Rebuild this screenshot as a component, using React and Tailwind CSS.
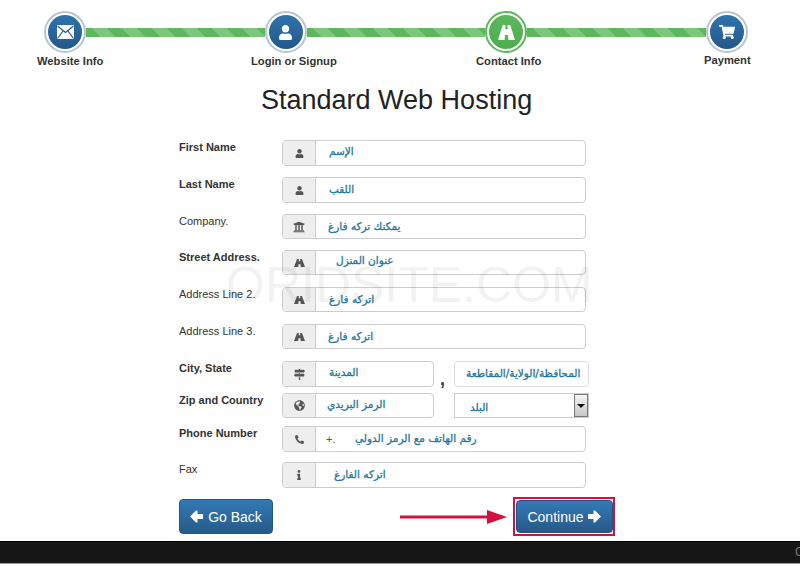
import React from "react";
import {
  FaUser,
  FaUniversity,
  FaMapSigns,
  FaGlobeAmericas,
  FaPhoneAlt,
  FaInfo,
  FaShoppingCart,
} from "react-icons/fa";

const arial = "font-['Liberation_Sans',Arial,sans-serif]";
const arabic = "font-['DejaVu_Sans','Liberation_Sans',sans-serif]";

const MailIcon = () => (
  <svg width="17" height="14" viewBox="0 0 17 14">
    <rect width="17" height="14" fill="#fff" />
    <path d="M.5 1l8 6.500 8-6.500M.5 13.500l5.500-7.500M16.500 13.500L11 6" fill="none" stroke="#24578a" strokeWidth="1.2" />
  </svg>
);

const RoadIcon = ({ w = 18, h = 18 }) => (
  <svg width={w} height={h} viewBox="0 0 18 18" preserveAspectRatio="none" fill="currentColor">
    <path d="M5 0h3L7.700 5h2.600L10 0h3l5 18h-7l-.4-6H7.400L7 18H0z" />
  </svg>
);

const ArrowLeft = () => (
  <svg width="13" height="13" viewBox="0 0 13 13" fill="#fff">
    <path d="M0 6.500L6 .5h1.500v3.500H13v5H7.500v3.500H6z" />
  </svg>
);

const ArrowRight = () => (
  <svg width="13" height="13" viewBox="0 0 13 13" fill="#fff">
    <path d="M13 6.500L7 .5H5.500v3.500H0v5h5.500v3.500H7z" />
  </svg>
);

const Step = ({ icon, green }) => (
  <div
    className={`flex h-[42px] w-[42px] shrink-0 rounded-full border-2 bg-white p-[2px] ${
      green ? "border-[#5cb85c]" : "border-[#b7c4d2]"
    }`}
  >
    <div
      className={`flex flex-1 items-center justify-center rounded-full text-white ${
        green
          ? "bg-gradient-to-b from-[#5cb85c] to-[#4cae4c]"
          : "bg-gradient-to-b from-[#2f74ad] to-[#24578a]"
      }`}
    >
      {icon}
    </div>
  </div>
);

const Bar = () => (
  <div className="h-[9px] flex-1 bg-[repeating-linear-gradient(45deg,#5cb85c_0,#5cb85c_10.6px,#7cc77c_10.6px,#7cc77c_21.2px)]" />
);

const Addon = ({ icon }) => (
  <div className="flex w-[33px] shrink-0 items-center justify-center border-r border-[#ccc] bg-[#eee] text-[11px] text-[#555]">
    {icon}
  </div>
);

const Value = ({ children, className = "" }) => (
  <span
    dir="rtl"
    className={`${arabic} text-[10.500px] whitespace-nowrap text-[#23769c] [-webkit-text-stroke:0.3px_#23769c] ${className}`}
  >
    {children}
  </span>
);

const Group = ({ icon, short, className = "", children }) => (
  <div className={`flex overflow-hidden rounded border border-[#ccc] bg-white ${short ? "h-[25px]" : "h-[26px]"} ${className}`}>
    <Addon icon={icon} />
    <div className="flex flex-1 items-center">{children}</div>
  </div>
);

const Row = ({ label, bold, className = "", children }) => (
  <div className={`flex h-[26px] ${className}`}>
    <div className={`w-[103px] shrink-0 text-[11px] leading-[14px] whitespace-nowrap text-[#333] ${bold ? "font-bold" : ""}`}>
      {label}
    </div>
    {children}
  </div>
);

const App = () => {
  return (
    <div className={`relative flex h-[566px] w-[800px] flex-col overflow-hidden bg-white ${arial}`}>
      {/* stepper */}
      <div className="flex items-center pt-[11px] pl-[44px] pr-[52px]">
        <Step icon={<MailIcon />} />
        <Bar />
        <Step icon={<FaUser size={15} />} />
        <Bar />
        <Step green icon={<RoadIcon w={17} h={15} />} />
        <Bar />
        <Step icon={<FaShoppingCart size={16} />} />
      </div>
      <div className="mt-[1px] flex pl-[37px] text-[11.200px] leading-[14px] font-bold whitespace-nowrap text-[#333]">
        <span className="w-[66px]">Website Info</span>
        <span className="ml-[148px] w-[85px]">Login or Signup</span>
        <span className="ml-[140px] w-[64px]">Contact Info</span>
        <span className="ml-[164px] -mt-px">Payment</span>
      </div>

      <h1 className="mt-[13px] pl-[261px] text-[27px] leading-[38px] text-[#222]">Standard Web Hosting</h1>

      {/* form */}
      <div className="mt-[21px] pl-[179px]">
        <Row label="First Name" bold>
          <Group icon={<FaUser size={9} />} className="w-[304px]">
            <Value className="ml-[13px] -mt-[3px]">الإسم</Value>
          </Group>
        </Row>
        <Row label="Last Name" bold className="mt-[11px]">
          <Group icon={<FaUser size={9} />} className="w-[304px]">
            <Value className="ml-[13px]">اللقب</Value>
          </Group>
        </Row>
        <Row label="Company." className="mt-[11px]">
          <Group short icon={<FaUniversity size={12} />} className="w-[304px]">
            <Value className="ml-[12px]">يمكنك تركه فارغ</Value>
          </Group>
        </Row>
        <Row label="Street Address." bold className="mt-[10px]">
          <Group short icon={<RoadIcon w={11} h={8} />} className="w-[304px]">
            <Value className="ml-[20px] -mt-[3px]">عنوان المنزل</Value>
          </Group>
        </Row>
        <Row label="Address Line 2." className="mt-[11px]">
          <Group short icon={<RoadIcon w={11} h={8} />} className="w-[304px]">
            <Value className="ml-[13px]">اتركه فارغ</Value>
          </Group>
        </Row>
        <Row label="Address Line 3." className="mt-[11px]">
          <Group short icon={<RoadIcon w={11} h={8} />} className="w-[304px]">
            <Value className="ml-[12px]">اتركه فارغ</Value>
          </Group>
        </Row>
        <Row label="City, State" bold className="mt-[11px]">
          <Group icon={<FaMapSigns size={11} />} className="w-[152px]">
            <Value className="ml-[13px] -mt-[3px]">المدينة</Value>
          </Group>
          <span className="mt-[8px] ml-[6px] w-[14px] text-lg leading-[20px] font-bold text-[#333]">,</span>
          <div className="flex h-[26px] w-[135px] items-center rounded-sm border border-[#ddd] bg-white">
            <Value className="ml-[11px]">المحافظة/الولاية/المقاطعة</Value>
          </div>
        </Row>
        <Row label="Zip and Country" bold className="mt-[6px]">
          <Group short icon={<FaGlobeAmericas size={11} />} className="w-[152px]">
            <Value className="ml-[11px] -mt-[2px]">الرمز البريدي</Value>
          </Group>
          <div className="ml-[20px] flex h-[25px] w-[135px] items-center border border-[#ccc] bg-white">
            <div className="ml-[15px] flex-1 text-left">
              <Value>البلد</Value>
            </div>
            <div className="flex h-full w-[14px] items-center justify-center border border-[#777] bg-gradient-to-b from-[#f4f4f4] to-[#c8c8c8]">
              <span className="h-0 w-0 border-x-[4px] border-t-[4px] border-x-transparent border-t-black" />
            </div>
          </div>
        </Row>
        <Row label="Phone Number" bold className="mt-[7px]">
          <Group icon={<FaPhoneAlt size={9} />} className="w-[304px]">
            <span className="ml-[10px] w-[29px] text-[11px] text-[#555]">+.</span>
            <Value>رقم الهاتف مع الرمز الدولي</Value>
          </Group>
        </Row>
        <Row label="Fax" className="mt-[10px]">
          <Group icon={<FaInfo size={10} />} className="w-[304px]">
            <Value className="ml-[18px]">اتركه الفارغ</Value>
          </Group>
        </Row>

        <div className="mt-[9px] flex items-center">
          <button className="flex h-[35px] w-[94px] items-center justify-center gap-[5px] rounded border border-[#245580] bg-gradient-to-b from-[#337ab7] to-[#265a88] text-sm text-white">
            <ArrowLeft />
            Go Back
          </button>
          {/* pointer drawn on the shot */}
          <svg width="107" height="16" viewBox="0 0 107 16" className="ml-[127px]">
            <path d="M0 6.500h90v3H0z" fill="#d5103f" />
            <path d="M87 1l20 7-20 7z" fill="#d5103f" />
          </svg>
          <div className="ml-[6px] flex h-[39px] w-[102px] items-center justify-center border-2 border-[#d5103f]">
            <button className="flex h-[33px] w-[97px] items-center justify-center gap-[4px] rounded border border-[#245580] bg-gradient-to-b from-[#337ab7] to-[#265a88] text-sm text-white">
              Continue
              <ArrowRight />
            </button>
          </div>
        </div>
      </div>

      {/* footer */}
      <div className="mt-[5px] h-[22px] shrink-0 overflow-hidden border-t border-black bg-[#161616] pl-[795px] text-xs leading-[21px] whitespace-nowrap text-[#778]">
        Copyright
      </div>
      <div className="h-px shrink-0 bg-[#999]" />

      {/* watermark */}
      <div className="pointer-events-none absolute top-[256px] left-[226px] text-[50px] leading-[58px] whitespace-nowrap text-black/[0.05]">
        ORIDSITE.COM
      </div>
    </div>
  );
};

export default App;
